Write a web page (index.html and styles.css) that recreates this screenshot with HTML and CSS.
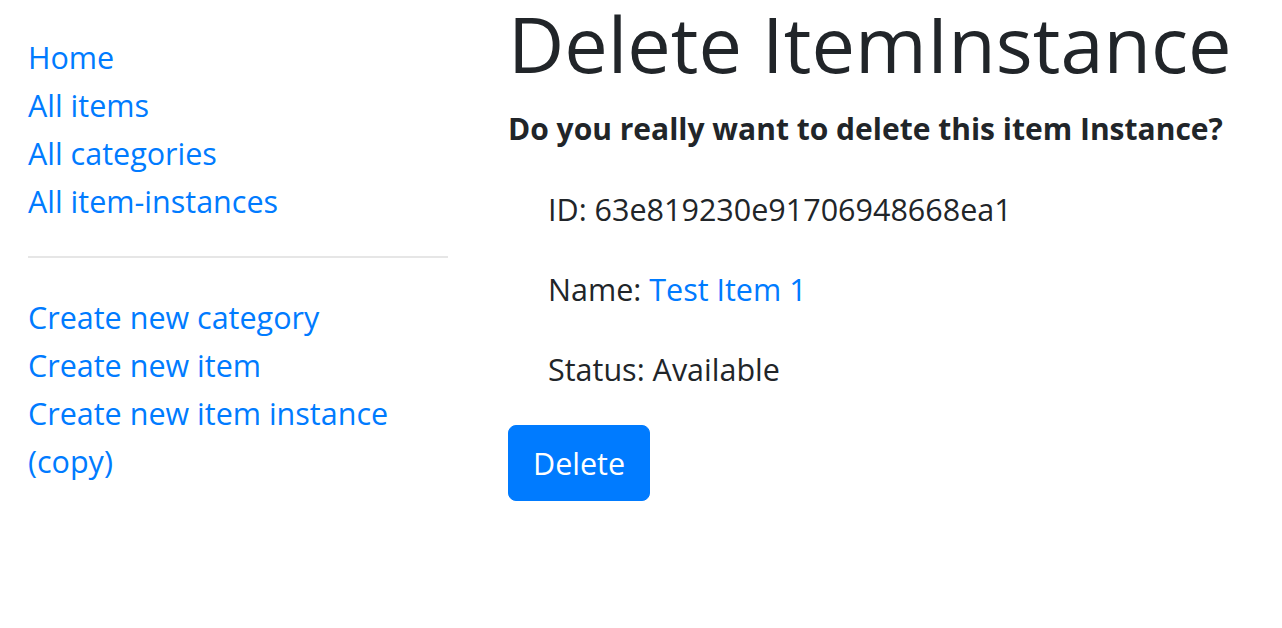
FILE: index.html
```html
<!DOCTYPE html>
<html lang="en">
<head>
<meta charset="utf-8">
<title>Delete ItemInstance</title>
<link rel="stylesheet" href="styles.css">
</head>
<body>
<div class="page">
  <nav class="sidebar">
    <ul class="nav-list">
      <li><a href="#">Home</a></li>
      <li><a href="#">All items</a></li>
      <li><a href="#">All categories</a></li>
      <li><a href="#">All item-instances</a></li>
    </ul>
    <hr class="divider">
    <ul class="nav-list">
      <li><a href="#">Create new category</a></li>
      <li><a href="#">Create new item</a></li>
      <li><a href="#">Create new item instance (copy)</a></li>
    </ul>
  </nav>
  <main class="main">
    <h1 class="title">Delete ItemInstance</h1>
    <p class="question">Do you really want to delete this item Instance?</p>
    <div class="details">
      <p class="detail">ID: 63e819230e91706948668ea1</p>
      <p class="detail">Name: <a href="#">Test Item 1</a></p>
      <p class="detail">Status: Available</p>
    </div>
    <form class="delete-form">
      <button type="button" class="btn-primary">Delete</button>
    </form>
  </main>
</div>
</body>
</html>
```

FILE: styles.css
```css
html, body {
  margin: 0;
  padding: 0;
  background: #fff;
}
body {
  font-family: "Open Sans", "Noto Sans", sans-serif;
  font-size: 30.5px;
  line-height: 48px;
  color: #212529;
}
a {
  color: #007bff;
  text-decoration: none;
}
.page {
  display: flex;
  padding-left: 28px;
}
.sidebar {
  width: 420px;
  flex: none;
  padding-top: 33px;
}
.nav-list {
  list-style: none;
  margin: 0;
  padding: 0;
}
.divider {
  border: 0;
  border-top: 2px solid #e6e6e6;
  margin: 31px 0 35px;
}
.main {
  margin-left: 60px;
  flex: 1;
}
.title {
  font-size: 77.5px;
  line-height: 86px;
  font-weight: 500;
  margin: 0;
}
.question {
  font-size: 30px;
  font-weight: 700;
  margin: 19px 0 32px;
}
.details {
  padding-left: 40px;
}
.detail {
  margin: 0 0 32px;
}
.delete-form {
  margin: 0;
}
.btn-primary {
  font: inherit;
  line-height: 48px;
  color: #fff;
  background: #007bff;
  border: 1px solid #007bff;
  border-radius: 8px;
  padding: 13px 24px;
  cursor: pointer;
}
```
